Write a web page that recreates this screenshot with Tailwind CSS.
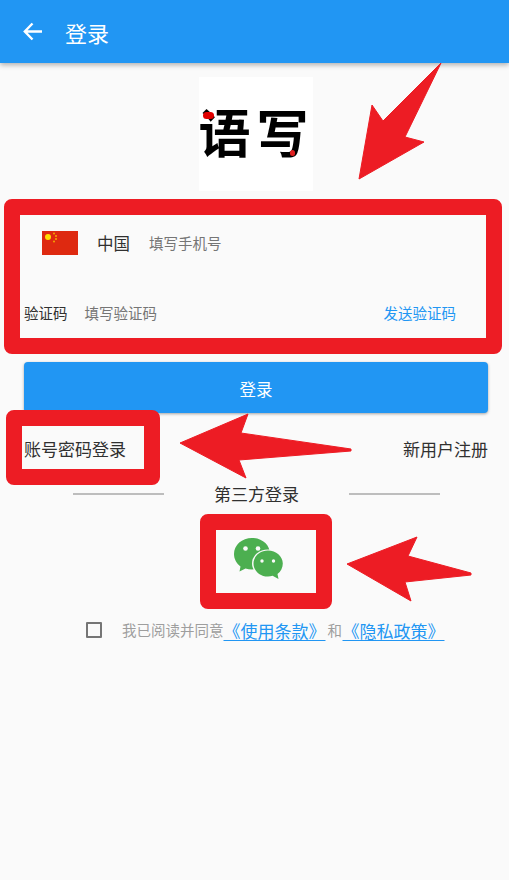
<!DOCTYPE html>
<html lang="zh">
<head>
<meta charset="utf-8">
<script src="https://cdn.jsdelivr.net/npm/@tailwindcss/browser@4"></script>
</head>
<body class="bg-[#fafafa]">
<div class="relative w-[509px] h-[880px] overflow-hidden bg-[#fafafa] font-['Noto_Sans_CJK_SC',sans-serif]">
  <header class="h-[63px] bg-[#2196f3] flex items-center pl-[22px] gap-[21px] text-white shadow-[0_2px_5px_rgba(0,0,0,0.3)]">
    <svg class="w-[22px] h-[22px]" viewBox="0 0 22 22" fill="none" stroke="white" stroke-width="2.400"><path d="M20 10.500H3M10.500 2.500L2.800 10.500L10.500 18.500"/></svg>
    <h1 class="text-[22px] leading-none font-normal mt-[1px]">登录</h1>
  </header>

  <main class="flex flex-col pl-[24px] pr-[21px]">
    <div class="mt-[14px] mx-auto w-[114px] h-[114px] bg-white flex items-center justify-center relative">
      <span class="text-[52px] leading-none font-bold text-black whitespace-nowrap tracking-[6px] pl-[1px] mb-[6px]">语写</span>
      <span class="absolute left-[4px] top-[35px] w-[11px] h-[7px] rounded-full bg-[#e00000]"></span>
      <span class="absolute left-[91px] top-[73px] w-[5px] h-[6px] rounded-full bg-[#e02020]"></span>
    </div>

    <div class="mt-[39px] h-[26px] flex items-center pl-[18px]">
      <svg class="w-[36px] h-[24px] shrink-0" viewBox="0 0 36 24"><rect width="36" height="24" fill="#de2910"/><circle cx="6" cy="6" r="3" fill="#ffde00"/><circle cx="12" cy="2.500" r="1" fill="#f5a800"/><circle cx="14" cy="5" r="1" fill="#f5a800"/><circle cx="14" cy="8" r="1" fill="#f5a800"/><circle cx="12" cy="10.500" r="1" fill="#f5a800"/></svg>
      <span class="ml-[19px] mt-[1px] text-[16.500px] leading-none text-[#303030]">中国</span>
      <span class="ml-[19px] mt-[1px] text-[14.500px] leading-none text-[#757575]">填写手机号</span>
    </div>

    <div class="mt-[44px] h-[26px] flex items-center">
      <span class="text-[14.500px] leading-none text-[#303030]">验证码</span>
      <span class="ml-[17px] text-[14.500px] leading-none text-[#757575]">填写验证码</span>
      <span class="ml-auto mr-[32px] text-[14.500px] leading-none text-[#2196f3]">发送验证码</span>
    </div>

    <button class="mt-[36px] h-[51px] w-[464px] pt-[3px] rounded-[4px] bg-[#2196f3] text-white text-[16.500px] leading-none shadow-[0_1px_3px_rgba(0,0,0,0.35)]">登录</button>

    <div class="mt-[23px] h-[24px] flex items-center justify-between text-[17px] leading-none text-[#303030]">
      <span>账号密码登录</span>
      <span>新用户注册</span>
    </div>

    <div class="mt-[22px] h-[24px] flex items-center text-[17px] leading-none text-[#303030] pl-[49px]">
      <span class="w-[91px] h-[2px] bg-[#bdbdbd]"></span>
      <span class="ml-[50px] -mt-[2px]">第三方登录</span>
      <span class="ml-[50px] w-[91px] h-[2px] bg-[#bdbdbd]"></span>
    </div>

    <div class="mt-[32px] flex justify-center pl-[5px]">
      <svg class="w-[50px] h-[42px]" viewBox="0 0 50 42">
        <path d="M18 0C8 0 0 6.900 0 16C0 21 2.500 25.500 6.500 28.500L5.500 33.500L11.500 30.500C13.500 31.200 15.700 31.500 18 31.500C28 31.500 36 24.500 36 16C36 6.900 28 0 18 0Z" fill="#4caf50"/>
        <ellipse cx="34" cy="25.500" rx="16" ry="14" fill="#fafafa"/>
        <path d="M34 12.500C26 12.500 19.500 18.300 19.500 25.500C19.500 32.700 26 38.500 34 38.500C35.600 38.500 37.200 38.300 38.600 37.800L44.500 41L43.500 36C46.800 33.500 48.800 29.700 48.800 25.500C48.800 18.300 42 12.500 34 12.500Z" fill="#4caf50"/>
        <circle cx="11.500" cy="10.500" r="2.300" fill="#fafafa"/><circle cx="24" cy="10.500" r="2.300" fill="#fafafa"/>
        <circle cx="28" cy="23" r="1.700" fill="#fafafa"/><circle cx="39.500" cy="23" r="1.700" fill="#fafafa"/>
      </svg>
    </div>

    <div class="mt-[40px] h-[20px] flex items-center pl-[62px] leading-none whitespace-nowrap">
      <span class="w-[16px] h-[16px] border-2 border-[#757575] rounded-[1px] shrink-0"></span>
      <span class="ml-[20px] text-[14.500px] text-[#9e9e9e]">我已阅读并同意</span>
      <a class="text-[17px] text-[#2196f3] underline underline-offset-2">《使用条款》</a>
      <span class="ml-[2px] mr-[0.500px] text-[14.500px] text-[#9e9e9e]">和</span>
      <a class="text-[17px] text-[#2196f3] underline underline-offset-2">《隐私政策》</a>
    </div>
  </main>

  <div class="absolute left-[4px] top-[199px] w-[498px] h-[155px] border-[16px] border-[#ed1c24] rounded-[8px]"></div>
  <div class="absolute left-[6px] top-[410px] w-[154px] h-[75px] border-[16px] border-[#ed1c24] rounded-[8px]"></div>
  <div class="absolute left-[200px] top-[514px] w-[132px] h-[95px] border-[16px] border-[#ed1c24] rounded-[8px]"></div>
  <svg class="absolute left-0 top-0 w-[509px] h-[880px] pointer-events-none" viewBox="0 0 509 880" fill="#ed1c24" stroke="#ed1c24" stroke-width="1" stroke-linejoin="round">
    <polygon points="359,179 372,105 383,121 441,63 405,137 424,142"/>
    <polygon points="180,443 248,414 241,433 351,449 351,451 239,460 246,478"/>
    <polygon points="347,564 417,537 408,556 471,573 471,575 405,582 411,601"/>
  </svg>
</div>
</body>
</html>
